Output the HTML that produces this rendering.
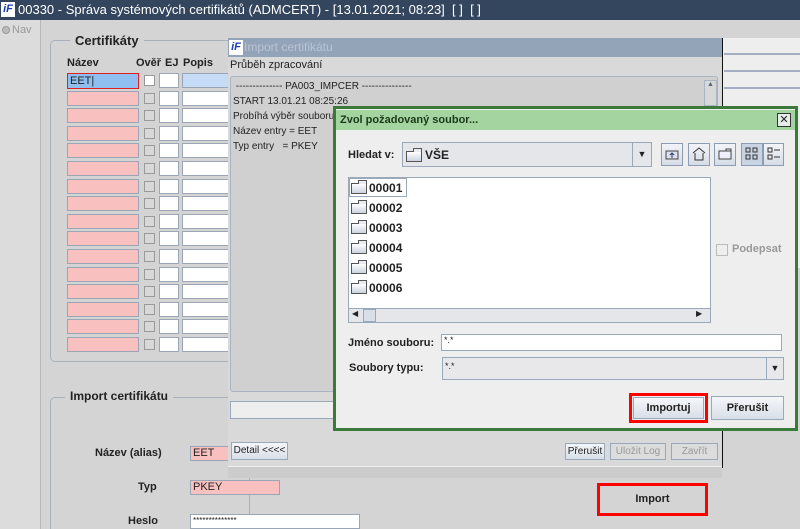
<!DOCTYPE html>
<html style="overflow:hidden;width:800px;height:529px"><head><meta charset="utf-8"><style>
*{box-sizing:border-box;margin:0;padding:0}
body{width:800px;height:529px;overflow:hidden;background:#d4d4d4;font-family:"Liberation Sans",sans-serif;font-size:11px;color:#222;position:relative}
.a{position:absolute}
.tb{left:0;top:0;width:800px;height:20px;background:#33465e;color:#fff;font-size:13px;line-height:20px;padding-left:18px;white-space:nowrap}
.logo{left:1px;top:2px;width:14px;height:15px;background:#fff;color:#1a3fb0;font:italic bold 11px "Liberation Sans";line-height:15px;text-align:center}
.fld{position:absolute;height:15px;border:1px solid #9aa6b6;background:#fff}
.pk{background:#f9c0c0}
.cb{position:absolute;width:11px;height:11px;border:1px solid #999;background:#d8d8d8}
.btn{position:absolute;border:1px solid #9aa8bc;background:linear-gradient(#f4f6fa,#d8dfe8);text-align:center;font-size:11px;color:#222}
.grp{position:absolute;border:1px solid #a8b0bc;border-radius:5px}
.lbl{position:absolute;font-weight:bold;font-size:11px;white-space:nowrap}
.ib{position:absolute;top:143px;width:22px;height:23px;border:1px solid #8c9cb2;background:linear-gradient(#f2f4f8,#d6dce6)}
.ib svg{position:absolute;left:2px;top:2px}
.fold{position:absolute;width:16px;height:11px;border:1px solid #555;background:linear-gradient(#fff,#ccd4e0)}
.fold:before{content:"";position:absolute;right:-1px;top:-4px;width:7px;height:3px;border:1px solid #555;border-bottom:none;background:#e8ecf2}
.fn{position:absolute;left:369px;font-weight:bold;font-size:12px}
</style></head><body>
<div class="a tb">00330 - Správa systémových certifikátů (ADMCERT) - [13.01.2021; 08:23]&nbsp; [ ]&nbsp; [ ]</div>
<div class="a logo">iF</div>
<div class="a" style="left:0;top:20px;width:41px;height:509px;background:#dcdcdc;border-right:1px solid #b8b8b8"></div>
<div class="a" style="left:2px;top:26px;width:8px;height:8px;border-radius:50%;background:#bbb;border:1px solid #999"></div>
<div class="a" style="left:12px;top:24px;color:#999;font-size:11px">Nav</div>

<div class="grp" style="left:50px;top:40px;width:200px;height:322px"></div>
<div class="a" style="left:70px;top:33px;background:#d4d4d4;padding:0 5px;font-weight:bold;font-size:13px">Certifikáty</div>
<div class="lbl" style="left:67px;top:57px">Název</div>
<div class="lbl" style="left:136px;top:57px">Ověř</div>
<div class="lbl" style="left:165px;top:57px">EJ</div>
<div class="lbl" style="left:183px;top:57px">Popis</div>
<div class="fld" style="left:67px;top:73px;width:72px;height:16px;background:#8fbff0;border:1px solid #e02020;font-size:11px;line-height:14px;padding-left:2px">EET|</div>
<div class="cb" style="left:144px;top:75px;background:#fff"></div>
<div class="fld" style="left:159px;top:73px;width:20px"></div>
<div class="fld" style="left:182px;top:73px;width:50px;background:#c6dcf6"></div>
<div id="rows"></div>

<div class="grp" style="left:50px;top:397px;width:200px;height:150px"></div>
<div class="a" style="left:65px;top:389px;background:#d4d4d4;padding:0 5px;font-weight:bold;font-size:12px">Import certifikátu</div>
<div class="lbl" style="left:95px;top:447px">Název (alias)</div>
<div class="fld pk" style="left:190px;top:446px;width:45px;line-height:13px;padding-left:2px">EET</div>
<div class="lbl" style="left:138px;top:481px">Typ</div>
<div class="fld pk" style="left:190px;top:480px;width:90px;line-height:13px;padding-left:2px">PKEY</div>
<div class="lbl" style="left:128px;top:515px">Heslo</div>
<div class="fld" style="left:190px;top:514px;width:170px;line-height:11px;padding-left:2px;font-size:8px">**************</div>
<div class="a" style="left:597px;top:483px;width:111px;height:33px;border:3px solid #f00;font-weight:bold;text-align:center;line-height:27px">Import</div>

<div class="a" style="left:722px;top:38px;width:78px;height:230px;background:#eee;border-left:1px solid #111"></div>
<div class="a" style="left:724px;top:53px;width:76px;height:2px;background:#a4b0c2"></div>
<div class="a" style="left:724px;top:70px;width:76px;height:2px;background:#a4b0c2"></div>
<div class="a" style="left:724px;top:87px;width:76px;height:2px;background:#a4b0c2"></div>
<div class="a" style="left:722px;top:268px;width:1px;height:200px;background:#111"></div>

<div class="a" style="left:228px;top:38px;width:494px;height:440px;background:#d9d9d9"></div>
<div class="a" style="left:228px;top:38px;width:494px;height:19px;background:#93a3b8;color:#b8c4d4;font-size:12px;line-height:19px;padding-left:16px">Import certifikátu</div>
<div class="a logo" style="left:229px;top:40px">iF</div>
<div class="a" style="left:230px;top:59px;font-size:11px">Průběh zpracování</div>
<div class="a" style="left:230px;top:76px;width:488px;height:316px;background:#d0d0d0;border:1px solid #aab4c2;border-radius:3px;padding:2px 2px;font-size:10px;line-height:15px">
&nbsp;-------------- PA003_IMPCER ---------------<br>START 13.01.21 08:25:26<br>Probíhá výběr souboru.<br>Název entry = EET<br>Typ entry &nbsp; = PKEY</div>
<div class="a" style="left:704px;top:80px;width:13px;height:26px;border:1px solid #aab4c2;background:#d8d8d8;font-size:7px;color:#567;text-align:center">▲</div>
<div class="a" style="left:230px;top:401px;width:110px;height:18px;background:#eee;border:1px solid #9aa8bc"></div>
<div class="btn" style="left:231px;top:442px;width:57px;height:18px;line-height:16px;font-size:10px">Detail &lt;&lt;&lt;&lt;</div>
<div class="btn" style="left:565px;top:443px;width:40px;height:17px;line-height:15px;font-size:10px">Přerušit</div>
<div class="btn" style="left:610px;top:443px;width:56px;height:17px;line-height:15px;font-size:10px;color:#999;background:#dcdcdc">Uložit Log</div>
<div class="btn" style="left:671px;top:443px;width:47px;height:17px;line-height:15px;font-size:10px;color:#999;background:#dcdcdc">Zavřít</div>
<div class="a" style="left:228px;top:466px;width:494px;height:12px;background:#ccc;border-top:1px solid #eee"></div>

<div class="a" style="left:333px;top:106px;width:465px;height:325px;background:#eeeeee;border:3px solid #3c7a3c"></div>
<div class="a" style="left:336px;top:110px;width:459px;height:20px;background:#a4d4a0;font-weight:bold;font-size:11px;color:#1b3a1b;line-height:20px;padding-left:4px">Zvol požadovaný soubor...</div>
<div class="a" style="left:777px;top:113px;width:14px;height:14px;border:1px solid #333;background:#e8ece8;font-size:11px;line-height:12px;text-align:center">✕</div>
<div class="lbl" style="left:348px;top:149px">Hledat v:</div>
<div class="a" style="left:402px;top:142px;width:250px;height:25px;border:1px solid #9aa8bc;background:#e4e6ea"></div>
<div class="fold" style="left:406px;top:151px"></div>
<div class="a" style="left:425px;top:148px;font-weight:bold;font-size:12px">VŠE</div>
<div class="a" style="left:632px;top:143px;width:19px;height:23px;border-left:1px solid #9aa8bc;font-size:9px;text-align:center;line-height:23px">▼</div>
<div class="ib" style="left:661px"><svg width="16" height="16"><rect x="2" y="5" width="12" height="8" fill="#dde" stroke="#444"/><path d="M8 12V7M6 9l2-2 2 2" stroke="#246" fill="none"/></svg></div>
<div class="ib" style="left:688px"><svg width="16" height="16"><path d="M2 7L8 2 14 7M4 7v7h8V7" stroke="#333" fill="none"/></svg></div>
<div class="ib" style="left:714px"><svg width="16" height="16"><rect x="2" y="5" width="12" height="8" fill="#eef" stroke="#444"/><path d="M9 5V3h5v2" stroke="#444" fill="none"/></svg></div>
<div class="ib" style="left:741px;background:#c8d4e4"><svg width="16" height="16"><path d="M2 2h4v4H2zM9 2h4v4H9zM2 9h4v4H2zM9 9h4v4H9z" stroke="#333" fill="none"/></svg></div>
<div class="ib" style="left:763px;width:21px"><svg width="16" height="16"><path d="M2 2h4v4H2zM2 9h4v4H2zM8 4h6M8 11h6" stroke="#333" fill="none"/></svg></div>
<div class="a" style="left:348px;top:177px;width:363px;height:146px;background:#fff;border:1px solid #9aa8bc"></div>
<div class="a" style="left:349px;top:178px;height:19px;border:1px solid #9aa8bc;width:58px"></div>
<div class="fold" style="left:351px;top:183px"></div><div class="fn" style="top:181px">00001</div>
<div class="fold" style="left:351px;top:203px"></div><div class="fn" style="top:201px">00002</div>
<div class="fold" style="left:351px;top:223px"></div><div class="fn" style="top:221px">00003</div>
<div class="fold" style="left:351px;top:243px"></div><div class="fn" style="top:241px">00004</div>
<div class="fold" style="left:351px;top:263px"></div><div class="fn" style="top:261px">00005</div>
<div class="fold" style="left:351px;top:283px"></div><div class="fn" style="top:281px">00006</div>
<div class="a" style="left:349px;top:308px;width:361px;height:14px;background:#e4e6ea;border-top:1px solid #9aa8bc"></div>
<div class="a" style="left:352px;top:309px;font-size:8px">◀</div>
<div class="a" style="left:363px;top:309px;width:13px;height:13px;border:1px solid #9aa8bc;background:#d8dfe8"></div>
<div class="a" style="left:696px;top:309px;font-size:8px">▶</div>
<div class="a" style="left:716px;top:244px;width:12px;height:12px;border:1px solid #bbb"></div>
<div class="a" style="left:732px;top:243px;font-weight:bold;color:#999;font-size:11px">Podepsat</div>
<div class="lbl" style="left:348px;top:337px">Jméno souboru:</div>
<div class="a" style="left:441px;top:334px;width:341px;height:17px;background:#fff;border:1px solid #9aa8bc;font-size:9px;padding-left:2px">*.*</div>
<div class="lbl" style="left:349px;top:362px">Soubory typu:</div>
<div class="a" style="left:442px;top:357px;width:342px;height:23px;background:#e8e8ea;border:1px solid #9aa8bc;font-size:9px;padding:3px 2px">*.*</div>
<div class="a" style="left:766px;top:358px;width:17px;height:21px;border-left:1px solid #9aa8bc;font-size:9px;text-align:center;line-height:21px">▼</div>
<div class="a" style="left:629px;top:393px;width:79px;height:30px;border:3px solid #f00"></div>
<div class="btn" style="left:633px;top:397px;width:71px;height:22px;line-height:20px;font-weight:bold">Importuj</div>
<div class="btn" style="left:711px;top:396px;width:73px;height:24px;line-height:22px;font-weight:bold">Přerušit</div>
<script>
var h='';for(var i=1;i<16;i++){var y=73+i*17.6;
h+='<div class="fld pk" style="left:67px;top:'+y+'px;width:72px"></div><div class="cb" style="left:144px;top:'+(y+2)+'px"></div><div class="fld" style="left:159px;top:'+y+'px;width:20px"></div><div class="fld" style="left:182px;top:'+y+'px;width:50px"></div>';}
document.getElementById('rows').innerHTML=h;
</script>
</body></html>
